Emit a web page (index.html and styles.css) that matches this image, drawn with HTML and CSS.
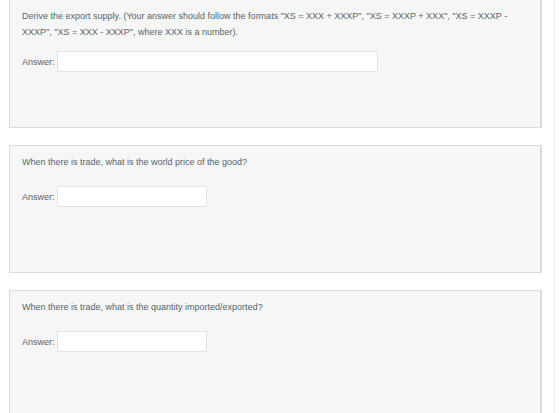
FILE: index.html
```html
<!DOCTYPE html>
<html lang="en">
<head>
    <meta charset="UTF-8">
    <title>Trade questions</title>
    <link rel="stylesheet" href="styles.css">
</head>
<body>
    <div class="page">
        <div class="question">
            <div class="prompt">Derive the export supply. (Your answer should follow the formats "XS = XXX + XXXP", "XS = XXXP + XXX", "XS = XXXP - XXXP", "XS = XXX - XXXP", where XXX is a number).</div>
            <label class="answer">Answer: <input type="text" class="wide"></label>
        </div>
        <div class="question">
            <div class="prompt">When there is trade, what is the world price of the good?</div>
            <label class="answer">Answer: <input type="text"></label>
        </div>
        <div class="question">
            <div class="prompt">When there is trade, what is the quantity imported/exported?</div>
            <label class="answer">Answer: <input type="text"></label>
        </div>
    </div>
</body>
</html>
```
FILE: styles.css
```css
body { margin: 0; font-family: "Liberation Sans", Arial, sans-serif; background: #fff; }
.page {
    padding: 0 12px 0 9px;
    border-right: 1px solid #ececec;
    width: 533px;
}
.question {
    background-color: #f6f6f6;
    border: 1px solid #dcdcdc;
    border-right: 2px solid #dcdcdc;
    border-top: none;
    height: 128px;
    padding: 8px 12px 0 12px;
    box-sizing: border-box;
    margin-bottom: 17px;
    color: #55656f;
    font-size: 9px;
}
.question + .question { border-top: 1px solid #dcdcdc; height: 128px; }
.prompt { line-height: 16px; }
.answer { display: flex; align-items: center; margin-top: 11px; }
.question + .question .answer { margin-top: 16px; }
input {
    margin-left: 2px;
    height: 21px;
    width: 150px;
    box-sizing: border-box;
    border: 1px solid #e4e4e4;
    background: #fff;
    padding: 0 4px;
}
input.wide { width: 321px; }
```
